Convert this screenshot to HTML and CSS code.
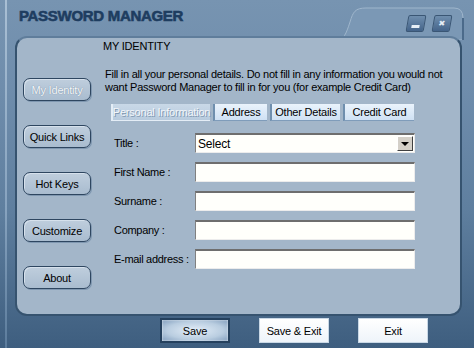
FILE: index.html
```html
<!DOCTYPE html>
<html lang="en">
<head>
    <meta charset="UTF-8">
    <title>Password Manager</title>
    <link rel="stylesheet" href="styles.css">
</head>
<body>
    <div class="window">
        <!-- raised tab that holds the window controls -->
        <svg class="ctrl-tab" width="140" height="40" viewBox="0 0 140 40">
            <path d="M0 40 C8 40 10 34 14 22 C17 12 19 8 30 8 L118 8 Q127 8 127 18 L127 40 Z" fill="#7b98b5" stroke="#9fb6cc" stroke-width="1"/>
            <path d="M127 18 L127 40" stroke="#4b6a8a" stroke-width="2"/>
        </svg>
        <div class="controls">
            <div class="ctrl-btn"><span class="ctrl-min"></span></div>
            <div class="ctrl-btn"><span class="ctrl-x">&#x2716;</span></div>
        </div>

        <div class="titlebar">PASSWORD MANAGER</div>

        <div class="panel">
            <div class="sidebar">
                <div class="side-btn active">My Identity</div>
                <div class="side-btn">Quick Links</div>
                <div class="side-btn">Hot Keys</div>
                <div class="side-btn">Customize</div>
                <div class="side-btn">About</div>
            </div>

            <div class="content">
                <div class="heading">MY IDENTITY</div>
                <p class="desc">Fill in all your personal details. Do not fill in any information you would not<br>want Password Manager to fill in for you (for example Credit Card)</p>

                <div class="tabs">
                    <div class="tab current" style="width: 99px">Personal Information</div>
                    <div class="tab" style="width: 54px">Address</div>
                    <div class="tab" style="width: 70px">Other Details</div>
                    <div class="tab" style="width: 71px">Credit Card</div>
                </div>

                <div class="form">
                    <div class="row">
                        <label>Title :</label>
                        <div class="select">
                            <span>Select</span>
                            <div class="arrow"><span></span></div>
                        </div>
                    </div>
                    <div class="row">
                        <label>First Name :</label>
                        <div class="field"></div>
                    </div>
                    <div class="row">
                        <label>Surname :</label>
                        <div class="field"></div>
                    </div>
                    <div class="row">
                        <label>Company :</label>
                        <div class="field"></div>
                    </div>
                    <div class="row">
                        <label>E-mail address :</label>
                        <div class="field"></div>
                    </div>
                </div>
            </div>
        </div>

        <div class="footer">
            <div class="foot-btn primary">Save</div>
            <div class="foot-btn">Save &amp; Exit</div>
            <div class="foot-btn">Exit</div>
        </div>
    </div>
</body>
</html>
```

FILE: styles.css
```css
body {
    margin: 0;
    font-family: "Liberation Sans", Arial, sans-serif;
    font-size: 11px;
    color: #000;
}
.window {
    position: relative;
    width: 474px;
    height: 348px;
    overflow: hidden;
    background: linear-gradient(180deg, #7794b1 0%, #6f8dac 25%, #5f7f9f 60%, #3e5e7f 100%);
}
.window::before {
    content: "";
    position: absolute;
    left: 5px;
    top: 0;
    bottom: 0;
    width: 2px;
    background: linear-gradient(180deg, #a9bfd4, #87a3bf 60%, #5c7c9c);
}
.ctrl-tab {
    position: absolute;
    left: 336px;
    top: 0;
}
.controls {
    position: absolute;
    left: 407px;
    top: 15px;
    display: flex;
    gap: 8px;
}
.ctrl-btn {
    width: 16px;
    height: 15px;
    background: linear-gradient(180deg, #6f8eae, #44648a);
    border: 1px solid #3a5674;
    border-radius: 2px;
    transform: skewX(-10deg);
    display: flex;
    align-items: center;
    justify-content: center;
}
.ctrl-min {
    width: 8px;
    height: 3px;
    margin-top: 6px;
    background: #e6eef6;
}
.ctrl-x {
    color: #e6eef6;
    font-size: 8px;
    line-height: 1;
}
.titlebar {
    height: 36px;
    box-sizing: border-box;
    padding: 7px 0 0 19px;
    font-size: 15px;
    font-weight: bold;
    letter-spacing: -0.3px;
    color: #1e3d60;
    -webkit-text-stroke: 0.6px #1e3d60;
    position: relative;
}
.panel {
    position: relative;
    margin-left: 15px;
    width: 447px;
    height: 280px;
    box-sizing: border-box;
    border: 2px solid #36536f;
    border-top-color: #5f7d9b;
    border-radius: 12px;
    background: #a3b6c9;
    display: flex;
}
.sidebar {
    width: 85px;
    display: flex;
    flex-direction: column;
    gap: 24px;
    padding: 40px 0 0 6px;
    box-sizing: border-box;
}
.side-btn {
    width: 68px;
    height: 23px;
    box-sizing: border-box;
    border: 1px solid #2e4660;
    border-radius: 7px;
    background: linear-gradient(180deg, #bfcedd, #a9bccf);
    box-shadow: inset 1px 1px 0 #d6e1ec, 1px 1px 0 #7f97b0;
    display: flex;
    align-items: center;
    justify-content: center;
    letter-spacing: -0.2px;
}
.side-btn.active {
    color: #f4f7fa;
    text-shadow: 0 0 1px #5f7790;
}
.content {
    flex: 1;
    padding-left: 1px;
}
.heading {
    margin-top: 1px;
    line-height: 14px;
    letter-spacing: -0.2px;
}
.desc {
    margin: 15px 0 0 2px;
    line-height: 13px;
    white-space: nowrap;
    letter-spacing: -0.25px;
}
.tabs {
    display: flex;
    gap: 3px;
    margin: 10px 0 0 8px;
}
.tab {
    height: 17px;
    box-sizing: border-box;
    background: linear-gradient(180deg, #eaf3fc, #cfe1f4);
    border-left: 2px solid #6f8fae;
    border-bottom: 1px solid #7f9cba;
    display: flex;
    align-items: center;
    justify-content: center;
    letter-spacing: -0.2px;
    white-space: nowrap;
}
.tab.current {
    background: linear-gradient(180deg, #c9d8e7, #b8cbde);
    border-left: 2px solid #e4edf6;
    border-bottom: 1px solid #e4edf6;
    color: #f2f6fa;
    text-shadow: 1px 1px 0 #8199b1;
}
.form {
    display: flex;
    flex-direction: column;
    gap: 9px;
    margin: 12px 0 0 11px;
}
.row {
    display: flex;
    align-items: center;
    height: 20px;
}
.row label {
    width: 81px;
    letter-spacing: -0.3px;
    white-space: nowrap;
}
.field,
.select {
    width: 220px;
    height: 20px;
    box-sizing: border-box;
    background: #fffffb;
    border-top: 2px solid #6e6e6e;
    border-left: 1px solid #808080;
    border-right: 1px solid #ececec;
    border-bottom: 1px solid #ececec;
}
.select {
    display: flex;
    align-items: center;
    justify-content: space-between;
    padding-left: 2px;
}
.select span {
    font-size: 12px;
    letter-spacing: -0.2px;
}
.arrow {
    width: 16px;
    height: 15px;
    margin-right: 1px;
    box-sizing: border-box;
    background: #d4d0c8;
    border: 1px solid;
    border-color: #fff #404040 #404040 #fff;
    display: flex;
    align-items: center;
    justify-content: center;
}
.arrow span {
    width: 0;
    height: 0;
    border-left: 4px solid transparent;
    border-right: 4px solid transparent;
    border-top: 4px solid #000;
}
.footer {
    display: flex;
    gap: 29px;
    padding: 2px 0 0 160px;
}
.foot-btn {
    width: 70px;
    height: 25px;
    box-sizing: border-box;
    background: linear-gradient(180deg, #ffffff, #eef4fa);
    border: 1px solid #c9d8e6;
    display: flex;
    align-items: center;
    justify-content: center;
    font-size: 11px;
    letter-spacing: -0.2px;
}
.foot-btn.primary {
    border: 2px solid #25415e;
    background: radial-gradient(ellipse at center, #e4eef8 0%, #b9cde0 60%, #7f9cbc 100%);
    box-shadow: inset 0 0 2px #fff;
}
```
